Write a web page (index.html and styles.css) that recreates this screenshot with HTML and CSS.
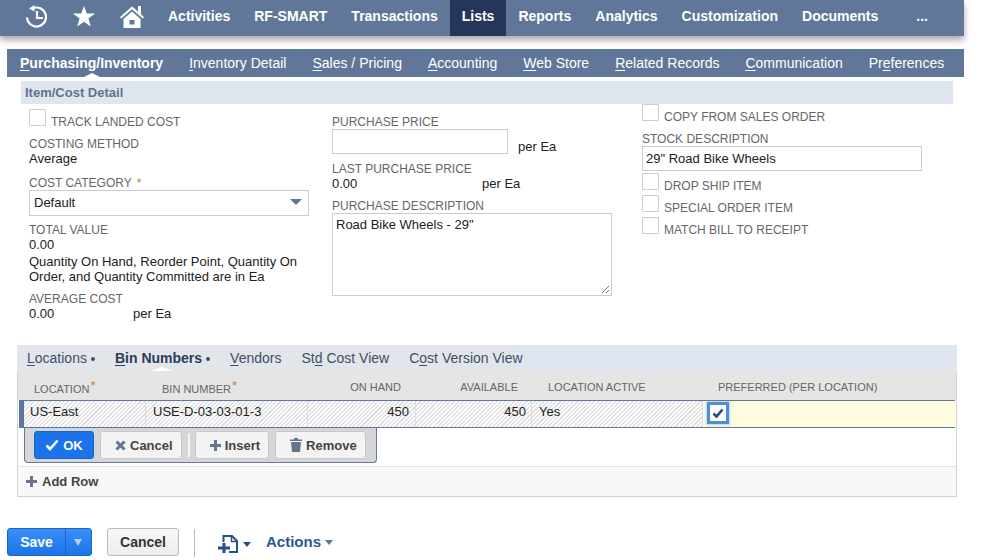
FILE: index.html
```html
<!DOCTYPE html>
<html lang="en">
<head>
  <meta charset="UTF-8">
  <title>Item</title>
  <link rel="stylesheet" href="styles.css">
</head>
<body>
<div class="page">
  <!-- top navigation -->
  <nav class="topnav">
    <a class="nav-icon icon-recent">
      <svg width="22" height="23" viewBox="0 0 22 23" fill="none" stroke="#fff" stroke-width="2.2">
        <path d="M7.5 3.4A9.5 9.5 0 1 1 2 12.5"/>
        <path d="M9.5 0L9.5 6.5L4 3.5z" fill="#fff" stroke="none"/>
        <path d="M12 6V13H18"/>
      </svg>
    </a>
    <a class="nav-icon icon-star">
      <svg width="22" height="21" viewBox="0 0 22 21" fill="#fff"><path d="M11 0l2.8 7.5H22l-6.6 5 2.4 8L11 15.8 4.2 20.5l2.4-8L0 7.5h8.2z"/></svg>
    </a>
    <a class="nav-icon icon-home">
      <svg width="24" height="23" viewBox="0 0 24 23" fill="#fff">
        <path d="M12 1.5L0 12l1.3 1.5L12 4.3l10.7 9.2L24 12l-3-2.6V1h-3v5.8L14.5 3.5z"/>
        <path d="M3.5 14L12 6.5l8.5 7.5v9h-17zM9.5 15v4.5h5V15z" fill-rule="evenodd"/>
      </svg>
    </a>
    <a class="nav-item">Activities</a>
    <a class="nav-item">RF-SMART</a>
    <a class="nav-item">Transactions</a>
    <a class="nav-item active">Lists</a>
    <a class="nav-item">Reports</a>
    <a class="nav-item">Analytics</a>
    <a class="nav-item">Customization</a>
    <a class="nav-item">Documents</a>
    <a class="nav-item nav-more">...</a>
  </nav>

  <!-- record tabs -->
  <div class="subtabs">
    <a class="subtab current"><u>P</u>urchasing/Inventory</a>
    <a class="subtab"><u>I</u>nventory Detail</a>
    <a class="subtab"><u>S</u>ales / Pricing</a>
    <a class="subtab"><u>A</u>ccounting</a>
    <a class="subtab"><u>W</u>eb Store</a>
    <a class="subtab"><u>R</u>elated Records</a>
    <a class="subtab"><u>C</u>ommunication</a>
    <a class="subtab">Pr<u>e</u>ferences</a>
  </div>

  <div class="section-title">Item/Cost Detail</div>

  <div class="form-cols">
    <div class="col col-left">
      <div class="check-row first-check"><span class="checkbox"></span><span class="label">TRACK LANDED COST</span></div>
      <div class="field gap-costing">
        <div class="label">COSTING METHOD</div>
        <div class="value">Average</div>
      </div>
      <div class="field gap-category">
        <div class="label">COST CATEGORY <span class="req">*</span></div>
        <div class="select">Default<span class="select-arrow"></span></div>
      </div>
      <div class="field gap-total">
        <div class="label">TOTAL VALUE</div>
        <div class="value">0.00</div>
        <div class="value note">Quantity On Hand, Reorder Point, Quantity On Order, and Quantity Committed are in Ea</div>
      </div>
      <div class="field gap-average">
        <div class="label">AVERAGE COST</div>
        <div class="value per-row"><span class="num">0.00</span>per Ea</div>
      </div>
    </div>

    <div class="col col-mid">
      <div class="field">
        <div class="label">PURCHASE PRICE</div>
        <div class="price-row"><span class="input price-input"></span><span class="per-ea">per Ea</span></div>
      </div>
      <div class="field gap-last">
        <div class="label">LAST PURCHASE PRICE</div>
        <div class="value per-row"><span class="num">0.00</span>per Ea</div>
      </div>
      <div class="field gap-desc">
        <div class="label">PURCHASE DESCRIPTION</div>
        <div class="textarea">Road Bike Wheels - 29"
          <svg class="grip" width="9" height="9" viewBox="0 0 9 9" stroke="#777" fill="none"><path d="M1 8L8 1M5 8L8 5"/></svg>
        </div>
      </div>
    </div>

    <div class="col col-right">
      <div class="check-row"><span class="checkbox"></span><span class="label">COPY FROM SALES ORDER</span></div>
      <div class="field gap-stock">
        <div class="label">STOCK DESCRIPTION</div>
        <div class="input stock-input">29" Road Bike Wheels</div>
      </div>
      <div class="check-row gap-drop"><span class="checkbox"></span><span class="label">DROP SHIP ITEM</span></div>
      <div class="check-row gap-check"><span class="checkbox"></span><span class="label">SPECIAL ORDER ITEM</span></div>
      <div class="check-row gap-check"><span class="checkbox"></span><span class="label">MATCH BILL TO RECEIPT</span></div>
    </div>
  </div>

  <!-- sublist -->
  <div class="sublist-tabs">
    <div class="sublist-tabs-inner">
      <a class="ltab"><u>L</u>ocations<i class="dot"></i></a>
      <a class="ltab current"><u>B</u>in Numbers<i class="dot"></i></a>
      <a class="ltab"><u>V</u>endors</a>
      <a class="ltab">St<u>d</u> Cost View</a>
      <a class="ltab">C<u>o</u>st Version View</a>
    </div>
  </div>
  <div class="sublist">
    <div class="grid-row grid-head">
      <div class="cell c-loc">LOCATION<span class="req">*</span></div>
      <div class="cell c-bin">BIN NUMBER<span class="req">*</span></div>
      <div class="cell c-hand num-cell">ON HAND</div>
      <div class="cell c-avail num-cell">AVAILABLE</div>
      <div class="cell c-active">LOCATION ACTIVE</div>
      <div class="cell c-pref">PREFERRED (PER LOCATION)</div>
    </div>
    <div class="grid-row grid-edit">
      <div class="cell c-loc">US-East</div>
      <div class="cell c-bin">USE-D-03-03-01-3</div>
      <div class="cell c-hand num-cell">450</div>
      <div class="cell c-avail num-cell">450</div>
      <div class="cell c-active">Yes</div>
      <div class="cell c-pref">
        <span class="checked">
          <svg width="14" height="14" viewBox="0 0 14 14" fill="none" stroke="#234a86" stroke-width="2.6"><path d="M2.5 7.5L5.5 10.5L11.5 3.5"/></svg>
        </span>
      </div>
    </div>
    <div class="row-actions">
      <div class="action-panel">
        <button class="btn btn-ok">
          <svg width="14" height="12" viewBox="0 0 14 12" fill="none" stroke="#fff" stroke-width="2.6"><path d="M1.5 6.5L5 10L12.5 1.5"/></svg>OK
        </button>
        <button class="btn">
          <svg width="11" height="11" viewBox="0 0 11 11" fill="none" stroke="#68768a" stroke-width="3"><path d="M1.5 1.5L9.5 9.5M9.5 1.5L1.5 9.5"/></svg>Cancel
        </button>
        <span class="action-sep"></span>
        <button class="btn">
          <svg width="11" height="11" viewBox="0 0 11 11" fill="#68768a"><path d="M4 0h3v4h4v3H7v4H4V7H0V4h4z"/></svg>Insert
        </button>
        <button class="btn">
          <svg width="12" height="14" viewBox="0 0 12 14" fill="#68768a"><path d="M0 1.5h4V0h4v1.5h4V3H0zM1 4h10l-1 10H2z"/></svg>Remove
        </button>
      </div>
    </div>
    <div class="add-row">
      <svg width="11" height="11" viewBox="0 0 11 11" fill="#68768a"><path d="M4 0h3v4h4v3H7v4H4V7H0V4h4z"/></svg>Add Row
    </div>
  </div>

  <!-- page buttons -->
  <div class="footer-bar">
    <div class="save-btn"><span class="save-label">Save</span><span class="save-drop"></span></div>
    <button class="cancel-btn">Cancel</button>
    <span class="footer-sep"></span>
    <span class="new-icon">
      <svg width="20" height="18" viewBox="0 0 20 18" fill="none" stroke="#24508f" stroke-width="2">
        <path d="M5.5 7V1H14L19 6V17H11"/>
        <path d="M13.5 1V6.5H19" stroke-width="1.5"/>
        <path d="M0 13H12M6 8V18" stroke-width="3"/>
      </svg>
      <i class="caret"></i>
    </span>
    <span class="actions">Actions<i class="caret caret-grey"></i></span>
  </div>
</div>
</body>
</html>
```

FILE: styles.css
```css
body {
  margin: 0;
  background-color: #fff;
  font-family: "Liberation Sans", Arial, sans-serif;
  font-size: 13px;
  color: #222;
  overflow: hidden;
}
.page {
  width: 983px;
  height: 560px;
  overflow: hidden;
}
u {
  text-decoration: underline;
  text-underline-offset: 2px;
}

/* top nav */
.topnav {
  width: 964px;
  height: 36px;
  background-color: #607799;
  box-shadow: 0 4px 7px rgba(0,0,0,0.35);
  display: flex;
  align-items: center;
  color: #fff;
}
.nav-icon {
  display: flex;
  align-items: center;
  margin-top: -3px;
}
.icon-recent { margin-left: 25px; }
.icon-star { margin-left: 26px; }
.icon-home { margin-left: 25px; }
.nav-item {
  height: 36px;
  line-height: 33px;
  padding: 0 12px;
  font-size: 14px;
  font-weight: bold;
}
.nav-icon + .nav-item { margin-left: 12px; }
.nav-item.active {
  background-color: #24375a;
}
.nav-more {
  margin-left: 14px;
}

/* record tabs */
.subtabs {
  margin: 13px 0 0 7px;
  width: 957px;
  height: 28px;
  background-color: #607799;
  display: flex;
  color: #fff;
  font-size: 14px;
  padding-left: 13px;
  box-sizing: border-box;
}
.subtab {
  line-height: 28px;
  margin-right: 26px;
  white-space: nowrap;
  position: relative;
}
.subtab.current {
  font-weight: bold;
}
.subtab.current::after {
  content: "";
  position: absolute;
  left: 64px;
  bottom: 0;
  border-left: 8px solid transparent;
  border-right: 8px solid transparent;
  border-bottom: 4px solid #fff;
}
.section-title {
  margin: 4px 0 0 21px;
  width: 932px;
  height: 23px;
  line-height: 23px;
  background-color: #dfe6ef;
  color: #5f7391;
  font-size: 13px;
  font-weight: bold;
  padding-left: 4px;
  box-sizing: border-box;
}

/* form */
.form-cols {
  display: flex;
  height: 241px;
  margin-left: 29px;
}
.col { display: flex; flex-direction: column; }
.col-left { width: 280px; margin-right: 23px; padding-top: 5px; }
.col-mid { width: 280px; margin-right: 30px; padding-top: 11px; }
.col-right { width: 280px; }
.label {
  font-size: 12px;
  line-height: 15px;
  color: #666;
}
.value {
  font-size: 13px;
  line-height: 15px;
  color: #222;
  margin-top: -1px;
}
.check-row {
  display: flex;
  align-items: flex-start;
  height: 16px;
}
.checkbox {
  width: 15px;
  height: 15px;
  border: 1px solid #ccc;
  border-radius: 1px;
  flex: none;
  margin-right: 5px;
}
.check-row .label { margin-top: 6px; white-space: nowrap; }
.first-check { height: 20px; }
.gap-costing { margin-top: 8px; }
.gap-category { margin-top: 10px; }
.gap-total { margin-top: 7px; }
.gap-average { margin-top: 8px; }
.note { margin-top: 2px; }
.req { color: #c9852c; margin-left: 2px; }
.select {
  position: relative;
  height: 24px;
  line-height: 23px;
  border: 1px solid #ccc;
  padding-left: 4px;
  font-size: 13px;
  margin-top: -1px;
}
.select-arrow {
  position: absolute;
  right: 6px;
  top: 8px;
  border-left: 6px solid transparent;
  border-right: 6px solid transparent;
  border-top: 6px solid #607799;
}
.per-row { display: flex; }
.num { width: 104px; }
.col-mid .num { width: 150px; }
.price-row {
  display: flex;
  align-items: flex-end;
  margin-top: -1px;
}
.per-ea {
  font-size: 13px;
  line-height: 15px;
}
.input {
  display: block;
  border: 1px solid #ccc;
  box-sizing: border-box;
}
.price-input {
  width: 176px;
  height: 25px;
  margin-right: 10px;
}
.gap-last { margin-top: 8px; }
.gap-desc { margin-top: 8px; }
.textarea {
  position: relative;
  width: 280px;
  height: 83px;
  margin-top: -1px;
  border: 1px solid #ccc;
  box-sizing: border-box;
  font-size: 13px;
  line-height: 15px;
  padding: 3px;
}
.grip { position: absolute; right: 1px; bottom: 1px; }
.gap-stock { margin-top: 12px; }
.stock-input {
  height: 25px;
  line-height: 23px;
  padding-left: 3px;
  font-size: 13px;
  margin-top: -1px;
}
.gap-drop { margin-top: 2px; }
.gap-check { margin-top: 6px; }

/* sublist tabs */
.sublist-tabs {
  margin-left: 17px;
  width: 940px;
  height: 26px;
  background-color: #dfe6ef;
}
.sublist-tabs-inner {
  width: 499px;
  height: 26px;
  background-color: #e2e5ea;
  display: flex;
  padding-left: 10px;
  box-sizing: border-box;
  font-size: 14px;
  color: #3f4f68;
}
.ltab {
  line-height: 26px;
  margin-right: 20px;
  white-space: nowrap;
  position: relative;
}
.ltab.current {
  font-weight: bold;
  color: #2d3c58;
}
.ltab.current::after {
  content: "";
  position: absolute;
  left: 36px;
  bottom: 0;
  border-left: 11px solid transparent;
  border-right: 11px solid transparent;
  border-bottom: 4px solid #fff;
}
.dot {
  display: inline-block;
  width: 4px;
  height: 4px;
  border-radius: 50%;
  background-color: #3f4f68;
  margin-left: 4px;
  vertical-align: 2px;
}

/* sublist grid */
.sublist {
  margin-left: 17px;
  width: 940px;
  height: 126px;
  border: 1px solid #d4d4d4;
  border-top: none;
  box-sizing: border-box;
  background-color: #fff;
}
.grid-row { display: flex; }
.grid-head {
  height: 29px;
  background-color: #e5e5e5;
  align-items: center;
  font-size: 11px;
  color: #666;
  padding-top: 2px;
  box-sizing: border-box;
}
.grid-head .cell { border: none; }
.grid-edit {
  height: 28px;
  margin-left: 1px;
  margin-right: 1px;
  border-top: 1px solid #607799;
  border-bottom: 1px solid #607799;
  box-sizing: border-box;
  font-size: 13px;
  background: repeating-linear-gradient(135deg, #fff 0, #fff 1.5px, #e2e2e2 1.5px, #e2e2e2 3px);
  box-shadow: inset 5px 0 0 #607799;
}
.cell {
  box-sizing: border-box;
  white-space: nowrap;
  border-right: 1px solid #ddd;
}
.grid-edit .cell { line-height: 21px; }
.c-loc { width: 127px; padding-left: 11px; }
.c-bin { width: 162px; padding-left: 7px; }
.c-hand { width: 108px; padding-right: 6px; }
.c-avail { width: 116px; padding-right: 5px; }
.c-active { width: 171px; padding-left: 7px; }
.c-pref {
  flex: 1;
  padding-left: 7px;
  background-color: #fefde0;
  border-right: none;
}
.grid-head .c-loc { width: 128px; padding-left: 16px; }
.grid-head .c-bin { padding-left: 16px; }
.grid-head .c-hand { padding-right: 15px; }
.grid-head .c-avail { padding-right: 14px; }
.grid-head .c-active { padding-left: 16px; }
.grid-head .c-pref { padding-left: 15px; background: none; }
.grid-head .req { vertical-align: 3px; font-size: 13px; margin-left: 1px; }
.num-cell { text-align: right; }
.checked {
  display: flex;
  align-items: center;
  justify-content: center;
  width: 16px;
  height: 16px;
  margin-top: 4px;
  background-color: #fff;
  box-shadow: 0 0 0 3px #4b8fd8, 0 0 2px 4px rgba(75,143,216,0.4);
}

/* row buttons */
.row-actions {
  height: 39px;
  padding-left: 6px;
  border-bottom: 1px solid #e4e4e4;
  box-sizing: border-box;
}
.action-panel {
  width: 353px;
  height: 35px;
  border: 1px solid #607799;
  border-top: none;
  border-radius: 0 0 4px 4px;
  background-color: #d6d6d6;
  display: flex;
  align-items: center;
  box-sizing: border-box;
  padding-left: 9px;
}
.btn {
  flex: none;
  height: 28px;
  padding: 0 8px 0 14px;
  margin-right: 6px;
  border: 1px solid #c8c8c8;
  border-radius: 3px;
  background-color: #f3f3f3;
  font-family: inherit;
  font-size: 13px;
  font-weight: bold;
  color: #444;
  display: flex;
  align-items: center;
  gap: 4px;
}
.btn-ok {
  background-color: #1a73e8;
  border-color: #1467d0;
  color: #fff;
  width: 60px;
  padding: 0;
  justify-content: center;
}
.action-sep {
  flex: none;
  width: 2px;
  height: 24px;
  background-color: #f4f4f4;
  margin-right: 5px;
}
.add-row {
  height: 29px;
  background-color: #f8f8f8;
  display: flex;
  align-items: center;
  gap: 5px;
  padding-left: 8px;
  font-weight: bold;
  color: #444;
  font-size: 13px;
  box-sizing: border-box;
}

/* page buttons */
.footer-bar {
  display: flex;
  align-items: center;
  margin: 31px 0 0 7px;
  height: 28px;
}
.save-btn {
  display: flex;
  width: 85px;
  height: 28px;
  border-radius: 3px;
  background: linear-gradient(#3a90f6, #1a73e8);
  border: 1px solid #1a66c8;
  box-sizing: border-box;
  color: #fff;
  font-size: 14px;
  font-weight: bold;
}
.save-label {
  width: 57px;
  line-height: 26px;
  text-align: center;
  border-right: 1px solid #1a66c8;
}
.save-drop {
  margin: 10px 0 0 8px;
  width: 0;
  height: 0;
  border-left: 4px solid transparent;
  border-right: 4px solid transparent;
  border-top: 7px solid #b4cdf0;
}
.cancel-btn {
  width: 72px;
  height: 28px;
  margin-left: 15px;
  border: 1px solid #bbb;
  border-radius: 3px;
  background: linear-gradient(#f8f8f8, #ececec);
  font-family: inherit;
  font-size: 14px;
  font-weight: bold;
  color: #333;
}
.footer-sep {
  width: 1px;
  height: 28px;
  margin: 2px 0 0 15px;
  background-color: #bbb;
}
.new-icon {
  display: flex;
  align-items: center;
  margin: 4px 0 0 23px;
}
.caret {
  display: inline-block;
  border-left: 4px solid transparent;
  border-right: 4px solid transparent;
  border-top: 5px solid #24508f;
  margin-left: 5px;
}
.actions {
  margin: -2px 0 0 15px;
  font-size: 15px;
  font-weight: bold;
  color: #2a5796;
}
.caret-grey {
  border-top-color: #607799;
  margin-left: 4px;
  vertical-align: 2px;
}
```
